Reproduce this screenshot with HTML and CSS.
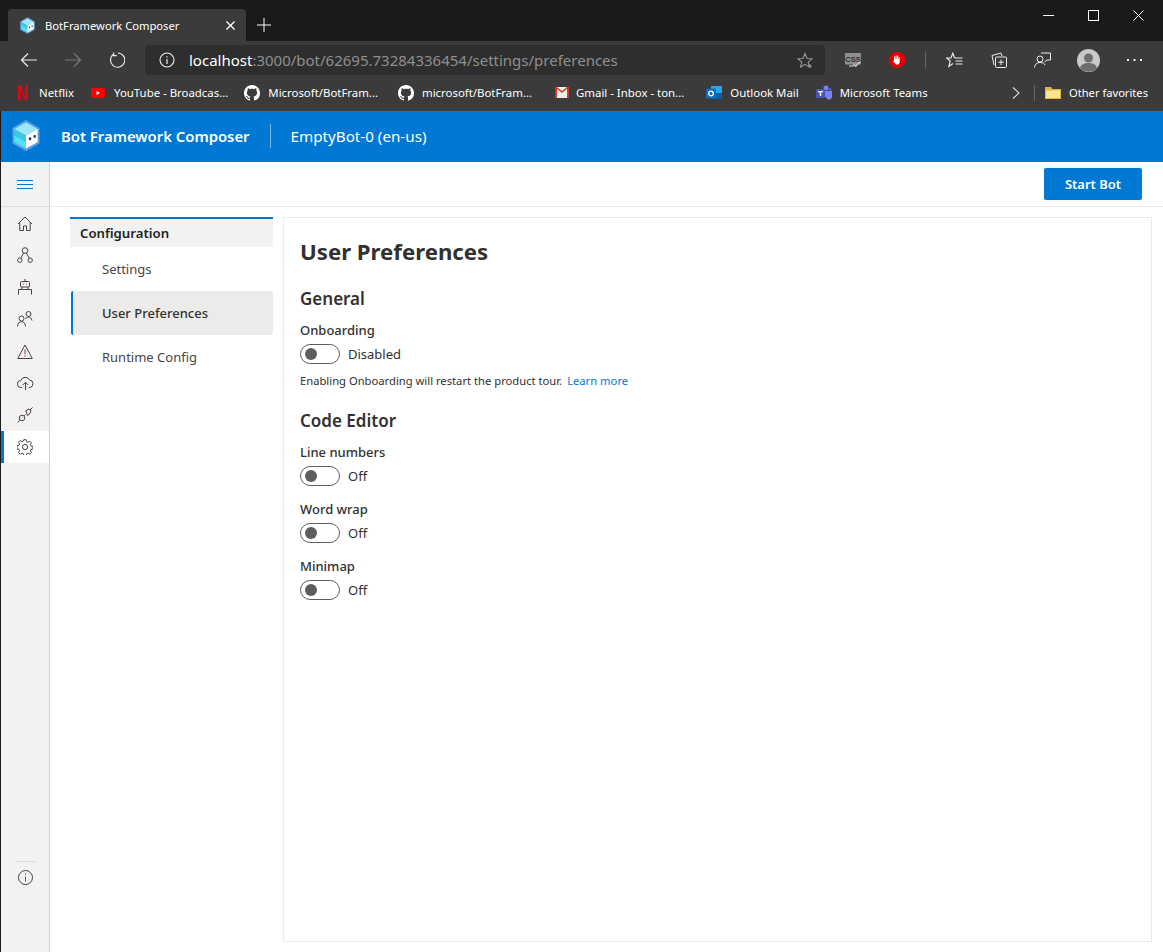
FILE: index.html
```html
<!DOCTYPE html>
<html lang="en">
<head>
<meta charset="utf-8">
<title>BotFramework Composer</title>
<link rel="stylesheet" href="styles.css">
</head>
<body>
<svg width="0" height="0" class="defs">
  <defs>
    <symbol id="cube" viewBox="0 0 30 34">
      <path d="M15 0.5 29.5 9v16.5L15 33.5.5 25.500V9z" fill="#5ea0e6"/>
      <path d="M15 3 27.500 10 15 17 2.500 10z" fill="#9ce8f8"/>
      <path d="M2.500 10 15 17v14L2.500 24z" fill="#3fc9e0"/>
      <path d="M2.500 17 15 24v7L2.500 24z" fill="#4fe3fa"/>
      <path d="M15 17 27.500 10v14L15 31z" fill="#fff"/>
      <rect x="18" y="19" width="2.600" height="3" rx="1" fill="#1b3f7a"/>
      <rect x="23" y="16.500" width="2.600" height="3" rx="1" fill="#1b3f7a"/>
    </symbol>
    <symbol id="gh" viewBox="0 0 16 16">
      <path fill="#fff" d="M8 0C3.580 0 0 3.580 0 8c0 3.540 2.290 6.530 5.470 7.590.4.070.55-.17.55-.38 0-.19-.01-.82-.01-1.490-2.010.37-2.530-.49-2.690-.94-.09-.23-.48-.94-.82-1.130-.28-.15-.68-.52-.01-.53.63-.01 1.080.58 1.230.82.720 1.210 1.870.87 2.330.66.070-.52.280-.87.510-1.070-1.780-.2-3.640-.89-3.640-3.950 0-.87.310-1.590.820-2.150-.080-.2-.360-1.020.080-2.120 0 0 .670-.210 2.200.820.640-.180 1.320-.270 2-.270s1.360.090 2 .270c1.530-1.040 2.200-.820 2.200-.820.440 1.100.160 1.920.080 2.120.510.560.820 1.270.820 2.150 0 3.070-1.870 3.750-3.650 3.950.290.250.540.730.540 1.480 0 1.070-.010 1.930-.010 2.200 0 .210.150.460.550.380A8.013 8.013 0 0 0 16 8c0-4.420-3.580-8-8-8z"/>
    </symbol>
  </defs>
</svg>

<header class="chrome">
  <div class="titlebar">
    <div class="tab">
      <svg class="tab-icon" width="15" height="17"><use href="#cube"/></svg>
      <span class="tab-title">BotFramework Composer</span>
      <svg class="tab-close" width="9" height="9" viewBox="0 0 10 10"><path d="M.5.500l9 9M9.500.5l-9 9" stroke="#fff" stroke-width="1.400"/></svg>
    </div>
    <svg class="new-tab" width="14" height="14" viewBox="0 0 14 14"><path d="M7 0v14M0 7h14" stroke="#fff" stroke-width="1"/></svg>
    <div class="win-controls">
      <svg width="11" height="11" viewBox="0 0 11 11"><path d="M0 5.500h11" stroke="#fff"/></svg>
      <svg width="11" height="11" viewBox="0 0 11 11"><rect x=".5" y=".5" width="10" height="10" fill="none" stroke="#fff"/></svg>
      <svg width="11" height="11" viewBox="0 0 11 11"><path d="M.5.500l10 10M10.500.5l-10 10" stroke="#fff"/></svg>
    </div>
  </div>
  <div class="toolbar">
    <svg class="tb-back" width="18" height="16" viewBox="0 0 18 16"><path d="M17 8H1.500M8 1.500 1.500 8 8 14.500" fill="none" stroke="#eee" stroke-width="1.200"/></svg>
    <svg class="tb-fwd" width="18" height="16" viewBox="0 0 18 16"><path d="M1 8h15.500M10 1.500 16.500 8 10 14.500" fill="none" stroke="#777" stroke-width="1.200"/></svg>
    <svg class="tb-reload" width="16" height="16" viewBox="0 0 18 18"><path d="M5.500 2.300A8 8 0 1 0 10 1.100M5.200 .5v3.600h3.600" fill="none" stroke="#eee" stroke-width="1.300"/></svg>
    <div class="omnibox">
      <svg class="omni-info" width="16" height="16" viewBox="0 0 16 16"><circle cx="8" cy="8" r="7" fill="none" stroke="#eee" stroke-width="1.100"/><path d="M8 7v5M8 4.200v1.300" stroke="#eee" stroke-width="1.200"/></svg>
      <span class="url"><span class="url-host">localhost</span>:3000/bot/62695.73284336454/settings/preferences</span>
      <svg class="omni-star" width="17" height="17" viewBox="0 0 17 17"><path d="M8 1.500 10 6.500l5 .3-3.800 3.300 1.200 5L8 12.300 3.600 15l1.200-5L1 6.800l5-.3z" fill="none" stroke="#999" stroke-width="1.100"/><path d="M13 12v4M11 14h4" stroke="#999"/></svg>
    </div>
    <svg class="ext-css" width="16" height="15" viewBox="0 0 16 15"><rect width="16" height="11.500" rx=".5" fill="#8f8f8f"/><text class="css-glyph" x="8" y="8.500">CSS</text><path d="M4 12h5v2H4z" fill="#8f8f8f"/><path d="M8.500 11l2.200 2.200 4.300-4.700" stroke="#c8c8c8" stroke-width="1.600" fill="none"/></svg>
    <svg class="ext-stop" width="16" height="16" viewBox="0 0 16 16"><path d="M5 0h6l5 5v6l-5 5H5l-5-5V5z" fill="#e40000"/><path d="M5 8V4.500h1V7h.5V3.500h1.100V7h.5V3.500h1.100V7h.5V5h1v5.500L9.500 12.500H7L4 9l1-.5z" fill="#fff"/></svg>
    <span class="tb-sep"></span>
    <svg class="tb-fav" width="17" height="16" viewBox="0 0 17 16"><path d="M8.600 6 6.800 1.200 5 6H.6l3.600 3L2.900 14.500 7 11.500M8.600 6H16.500M9.500 9H16.500M9.500 12H16.500" fill="none" stroke="#eee" stroke-width="1.100"/></svg>
    <svg class="tb-coll" width="16" height="16" viewBox="0 0 16 16"><path d="M3 13 1 3.500 10 1l1 3" fill="none" stroke="#eee"/><rect x="4.500" y="5" width="11" height="10.500" rx="1" fill="#3b3b3b" stroke="#eee"/><path d="M10 7.500v5.500M7.300 10.200h5.500" stroke="#eee"/></svg>
    <svg class="tb-share" width="17" height="16" viewBox="0 0 17 16"><circle cx="6" cy="7" r="3" fill="none" stroke="#eee"/><path d="M.5 15.500C1 12 3 10.500 6 10.500s4.500 1 5 2.500M7 1h9.500v7H13l-2.500 2" fill="none" stroke="#eee"/></svg>
    <svg class="tb-avatar" width="23" height="23" viewBox="0 0 23 23"><circle cx="11.500" cy="11.500" r="11.500" fill="#c9c9c9"/><circle cx="11.500" cy="9" r="4.500" fill="#6e6e6e"/><path d="M3 19c1-4 5-5 8.500-5s7.500 1 8.500 5a11.500 11.500 0 0 1-17 0z" fill="#6e6e6e"/></svg>
    <svg class="tb-more" width="15" height="3" viewBox="0 0 15 3"><path d="M0 0h2v2H0zM6.500 0h2v2h-2zM13 0h2v2h-2z" fill="#eee"/></svg>
  </div>
  <div class="bookmarks">
    <a class="bm bm-netflix"><svg width="10" height="16" viewBox="0 0 10 16"><path d="M0 0h3l4 10V0h3v16l-3-.6L3 6v9.400L0 16z" fill="#c8101a"/></svg>Netflix</a>
    <a class="bm bm-yt"><svg width="14" height="10" viewBox="0 0 14 10"><rect width="14" height="10" rx="2.500" fill="#f00"/><path d="M5.500 3v4L9 5z" fill="#fff"/></svg>YouTube - Broadcas...</a>
    <a class="bm bm-gh1"><svg width="16" height="16"><use href="#gh"/></svg>Microsoft/BotFram...</a>
    <a class="bm bm-gh2"><svg width="16" height="16"><use href="#gh"/></svg>microsoft/BotFram...</a>
    <a class="bm bm-gmail"><svg width="14" height="11" viewBox="0 0 14 11"><rect width="14" height="11" fill="#eee"/><path d="M0 0h2v11H0zM12 0h2v11h-2zM0 0h2l5 4 5-4h2L7 6z" fill="#d0392b"/></svg>Gmail - Inbox - ton...</a>
    <a class="bm bm-outlook"><svg width="16" height="16" viewBox="0 0 16 16"><path d="M5 1h11v13H5z" fill="#28a8ea"/><path d="M5 8h11v6H5z" fill="#0a5fa8"/><rect y="3.500" width="10" height="10" rx="1" fill="#0f6cbd"/><circle cx="5" cy="8.500" r="2.300" fill="none" stroke="#fff" stroke-width="1.300"/></svg>Outlook Mail</a>
    <a class="bm bm-teams"><svg width="16" height="16" viewBox="0 0 16 16"><circle cx="10" cy="3" r="2.500" fill="#7b83eb"/><circle cx="14" cy="4.500" r="1.700" fill="#5059c9"/><path d="M7 6h9v5a3 3 0 0 1-6 1H7z" fill="#7b83eb"/><rect y="4" width="9" height="9" rx="1" fill="#4b53bc"/><path d="M2 6h5v1.200H5.200V11H3.800V7.200H2z" fill="#fff"/></svg>Microsoft Teams</a>
    <svg class="bm-chev" width="8" height="12" viewBox="0 0 8 12"><path d="M1 .5 7 6l-6 5.500" fill="none" stroke="#ddd" stroke-width="1.100"/></svg>
    <span class="bm-sep"></span>
    <a class="bm bm-other"><svg width="16" height="13" viewBox="0 0 16 13"><path d="M0 1h6l1.500 2H16v10H0z" fill="#e0b54a"/><path d="M1 4.500h14V12H1z" fill="#fde58e"/></svg>Other favorites</a>
  </div>
</header>

<div class="app">
  <div class="app-header">
    <svg class="app-logo" width="28" height="33"><use href="#cube"/></svg>
    <span class="app-name">Bot Framework Composer</span>
    <span class="app-divider"></span>
    <span class="app-bot">EmptyBot-0 (en-us)</span>
  </div>
  <div class="app-body">
    <aside class="rail">
      <div class="rail-top">
        <svg width="16" height="12" viewBox="0 0 16 12"><path d="M0 2.500h16M0 6.500h16M0 10.500h16" stroke="#0078d4"/></svg>
      </div>
      <nav class="rail-nav">
        <a class="rail-item"><svg width="16" height="15" viewBox="0 0 16 15"><path d="M1 8 8 1l7 7M2.800 6.500v8h3.700V10h3v4.500h3.700v-8" fill="none" stroke="#444" stroke-width="1"/></svg></a>
        <a class="rail-item"><svg width="16" height="16" viewBox="0 0 16 16"><circle cx="8" cy="3.500" r="2.800" fill="none" stroke="#444"/><circle cx="2.800" cy="13.200" r="2.200" fill="none" stroke="#444"/><circle cx="13.200" cy="13.200" r="2.200" fill="none" stroke="#444"/><path d="M6.600 6 3.800 11.200M9.400 6l2.800 5.200" stroke="#444"/></svg></a>
        <a class="rail-item"><svg width="14" height="16" viewBox="0 0 14 16"><path d="M7 0v2.500" stroke="#444"/><rect x="2.500" y="2.500" width="9" height="5.500" rx="1" fill="none" stroke="#444"/><path d="M5 5h1M8 5h1" stroke="#a0337a"/><path d="M.5 15.500V10.500h13v5M4 8v2.500M10 8v2.500" fill="none" stroke="#444"/></svg></a>
        <a class="rail-item"><svg width="16" height="16" viewBox="0 0 16 16"><circle cx="11.500" cy="3" r="2.500" fill="none" stroke="#444"/><circle cx="4.500" cy="7.500" r="2.500" fill="none" stroke="#444"/><path d="M.5 15.500C.8 12 2.300 10.700 4.500 10.700s3.700 1.300 4 4.800M8.500 8c.5-1.300 1.700-2 3-2s3 1 3.500 3.500" fill="none" stroke="#444"/></svg></a>
        <a class="rail-item"><svg width="16" height="15" viewBox="0 0 16 15"><path d="M8 1 15.300 14.500H.7z" fill="none" stroke="#444"/><path d="M8 5.500v5M8 11.500v1.500" stroke="#a0337a"/></svg></a>
        <a class="rail-item"><svg width="17" height="14" viewBox="0 0 17 14"><path d="M5 11.500H4A3.500 3.500 0 0 1 3.800 4.500 4.800 4.800 0 0 1 12.600 4a3.800 3.800 0 0 1 .4 7.500h-1" fill="none" stroke="#444"/><path d="M8.500 14V6.500M5.800 9l2.700-2.700L11.200 9" fill="none" stroke="#444"/></svg></a>
        <a class="rail-item"><svg width="16" height="16" viewBox="0 0 16 16"><path d="M.5 15.500l2.300-2.300M15.500.5l-2.600 2.600" stroke="#444"/><circle cx="5" cy="11" r="2.800" fill="none" stroke="#444"/><path d="M8.800 3.700 12 1.900l2.100 2.100-1.800 3.200a2.500 2.500 0 0 1-1.700 1.300z" fill="none" stroke="#444"/><path d="M7 9l1.600-1.600" stroke="#a0337a"/></svg></a>
        <a class="rail-item rail-item-active"><svg width="16" height="16" viewBox="0 0 16 16"><path d="M6.800.7h2.400l.4 2 1.500.6 1.700-1.100 1.700 1.700-1.100 1.700.6 1.500 2 .4v2.400l-2 .4-.6 1.500 1.100 1.700-1.700 1.700-1.700-1.100-1.500.6-.4 2H6.800l-.4-2-1.500-.6-1.700 1.100-1.700-1.700 1.100-1.700-.6-1.500-2-.4V6.800l2-.4.6-1.500-1.100-1.700 1.700-1.700 1.700 1.100 1.500-.6z" fill="none" stroke="#444"/><circle cx="8" cy="8" r="2.600" fill="none" stroke="#444"/></svg></a>
      </nav>
      <div class="rail-bottom">
        <span class="rail-rule"></span>
        <svg width="15" height="15" viewBox="0 0 15 15"><circle cx="7.500" cy="7.500" r="7" fill="none" stroke="#444"/><path d="M7.500 6.500v5M7.500 3.500v1.500" stroke="#a0337a"/></svg>
      </div>
    </aside>
    <div class="main">
      <div class="commandbar"><button class="start-btn">Start Bot</button></div>
      <div class="workspace">
        <nav class="side-nav">
          <div class="side-head">Configuration</div>
          <a class="side-item">Settings</a>
          <a class="side-item side-item-active">User Preferences</a>
          <a class="side-item">Runtime Config</a>
        </nav>
        <section class="card">
          <h1 class="card-title">User Preferences</h1>
          <h2 class="group-title">General</h2>
          <div class="field">
            <div class="field-label">Onboarding</div>
            <div class="toggle-row"><span class="toggle"><span class="knob"></span></span><span class="toggle-text">Disabled</span></div>
            <p class="field-help">Enabling Onboarding will restart the product tour.<a class="help-link">Learn more</a></p>
          </div>
          <h2 class="group-title group-code">Code Editor</h2>
          <div class="field">
            <div class="field-label">Line numbers</div>
            <div class="toggle-row"><span class="toggle"><span class="knob"></span></span><span class="toggle-text">Off</span></div>
          </div>
          <div class="field">
            <div class="field-label">Word wrap</div>
            <div class="toggle-row"><span class="toggle"><span class="knob"></span></span><span class="toggle-text">Off</span></div>
          </div>
          <div class="field">
            <div class="field-label">Minimap</div>
            <div class="toggle-row"><span class="toggle"><span class="knob"></span></span><span class="toggle-text">Off</span></div>
          </div>
        </section>
      </div>
    </div>
  </div>
</div>
</body>
</html>
```
FILE: styles.css
```css
* { box-sizing: border-box; }
html, body { margin: 0; height: 100%; }
body {
  width: 1163px;
  height: 952px;
  overflow: hidden;
  display: flex;
  flex-direction: column;
  font-family: "Noto Sans", "Liberation Sans", sans-serif;
  font-size: 14px;
  color: #323130;
  background: #1a1a1a;
}
svg { display: block; flex: none; }
.defs { position: absolute; }
a { text-decoration: none; }

.chrome { flex: none; height: 111px; display: flex; flex-direction: column; color: #fff; }
.titlebar { height: 41px; flex: none; background: #1a1a1a; display: flex; align-items: flex-end; padding-left: 8px; }
.tab { width: 238px; height: 32px; background: #3b3b3b; border-radius: 4px 4px 0 0; display: flex; align-items: center; padding: 0 11px 0 12px; }
.tab-icon { margin-right: 10px; }
.tab-title { flex: 1; font-size: 11.200px; white-space: nowrap; }
.new-tab { margin: 0 0 9px 11px; }
.win-controls { margin-left: auto; align-self: flex-start; display: flex; gap: 34px; padding: 10px 19px 0 0; }

.toolbar { height: 37px; flex: none; background: #3b3b3b; display: flex; align-items: center; position: relative; padding-top: 1px; }
.tb-back { margin-left: 20px; }
.tb-fwd { margin-left: 26px; }
.tb-reload { margin-left: 27px; }
.omnibox { margin-left: 20px; width: 680px; height: 30px; background: #2e2e2e; border-radius: 4px; display: flex; align-items: center; padding: 0 11px 0 14px; }
.omni-info { margin-right: 14px; }
.url { flex: 1; font-size: 15px; color: #8e8e8e; white-space: nowrap; }
.url-host { color: #fff; }
.ext-css { margin-left: 20px; }
.css-glyph { font: 700 7.500px "Liberation Sans", sans-serif; fill: #2e2e2e; text-anchor: middle; }
.ext-stop { margin-left: 28px; }
.tb-sep { width: 1px; height: 16px; background: #666; margin-left: 20px; }
.tb-fav { margin-left: 20px; }
.tb-coll { margin-left: 28px; }
.tb-share { margin-left: 27px; }
.tb-avatar { margin-left: 26px; }
.tb-more { margin-left: 27px; }

.bookmarks { height: 33px; flex: none; background: #3b3b3b; display: flex; align-items: center; font-size: 11.400px; padding: 0 0 4px 18px; position: relative; }
.bm { color: #fff; display: flex; align-items: center; white-space: nowrap; }
.bm svg { margin-right: 8px; }
.bm-netflix svg { margin-right: 11px; }
.bm-yt { margin-left: 17px; }
.bm-yt svg { margin-right: 9px; }
.bm-gh1 { margin-left: 16px; }
.bm-gh2 { margin-left: 20px; }
.bm-gmail { margin-left: 23px; }
.bm-gmail svg { margin-right: 7px; }
.bm-outlook { margin-left: 22px; }
.bm-teams { margin-left: 17px; }
.bm-chev { margin-left: auto; }
.bm-sep { width: 1px; height: 16px; background: #666; margin: 0 10px 0 14px; }
.bm-other { margin-right: 15px; font-size: 11.150px; }

.app { flex: 1; min-height: 0; margin-left: 1px; display: flex; flex-direction: column; background: #fff; }
.app-header { flex: none; height: 51px; background: #0078d4; display: flex; align-items: center; color: #fff; padding: 0 0 2px 11px; }
.app-name { margin-left: 21px; font-size: 14.850px; font-weight: 600; white-space: nowrap; }
.app-divider { width: 1px; height: 24px; background: rgba(255, 255, 255, .45); margin: 0 20px; }
.app-bot { font-size: 15.200px; white-space: nowrap; }

.app-body { flex: 1; min-height: 0; display: flex; }
.rail { width: 49px; flex: none; background: #f3f2f1; border-right: 1px solid #d2d0ce; display: flex; flex-direction: column; }
.rail-top { flex: none; height: 45px; display: flex; align-items: center; justify-content: center; border-bottom: 1px solid #e1dfdd; }
.rail-nav { display: flex; flex-direction: column; }
.rail-item { height: 32px; display: flex; align-items: center; justify-content: center; border-left: 3px solid transparent; padding-right: 3px; }
.rail-item-active { background: #fff; border-left-color: #0078d4; }
.rail-bottom { margin-top: auto; padding-bottom: 67px; display: flex; flex-direction: column; align-items: center; gap: 8px; }
.rail-rule { width: 20px; height: 1px; background: #dcdad8; }

.main { flex: 1; min-width: 0; display: flex; flex-direction: column; }
.commandbar { flex: none; height: 45px; border-bottom: 1px solid #edebe9; display: flex; justify-content: flex-end; align-items: flex-start; padding: 6px 21px 0 0; }
.start-btn { width: 98px; height: 32px; background: #0078d4; color: #fff; border: 0; border-radius: 2px; font: 600 13px "Noto Sans", "Liberation Sans", sans-serif; }
.workspace { flex: 1; min-height: 0; display: flex; padding: 10px 11px 10px 20px; gap: 10px; }

.side-nav { width: 203px; flex: none; }
.side-head { height: 30px; border-top: 2px solid #0078d4; background: #f3f2f1; padding-left: 10px; display: flex; align-items: center; font-size: 13.200px; font-weight: 600; color: #201f1e; }
.side-item { height: 44px; display: flex; align-items: center; padding-left: 32px; font-size: 13px; color: #484644; }
.side-item-active { margin-left: 1px; padding-left: 29px; background: #edebe9; border-left: 2px solid #0078d4; border-radius: 2px; color: #323130; font-weight: 500; }

.card { flex: 1; min-width: 0; border: 1px solid #edebe9; padding: 16px 16px 16px; }
.card-title { margin: 0; height: 36px; line-height: 36px; font-size: 22.200px; font-weight: 700; color: #323130; }
.group-title { margin: 0; font-size: 17px; line-height: 24px; font-weight: 600; color: #323130; }
h2.group-title { margin-top: 17px; }
h2.group-code { margin-top: 20px; }
.field { margin-top: 9px; }
.field + .field { margin-top: 13px; }
.field-label { font-size: 13px; line-height: 20px; color: #323130; font-weight: 500; }
.toggle-row { display: flex; align-items: center; gap: 8px; margin-top: 4px; height: 20px; }
.toggle { width: 40px; height: 20px; border: 1px solid #605e5c; border-radius: 10px; display: flex; align-items: center; padding-left: 4px; }
.knob { width: 12px; height: 12px; border-radius: 50%; background: #605e5c; }
.toggle-text { font-size: 13px; color: #323130; }
.field-help { margin: 9px 0 0; font-size: 11.230px; line-height: 16px; color: #323130; white-space: nowrap; }
.help-link { color: #0078d4; margin-left: 5px; }
```
